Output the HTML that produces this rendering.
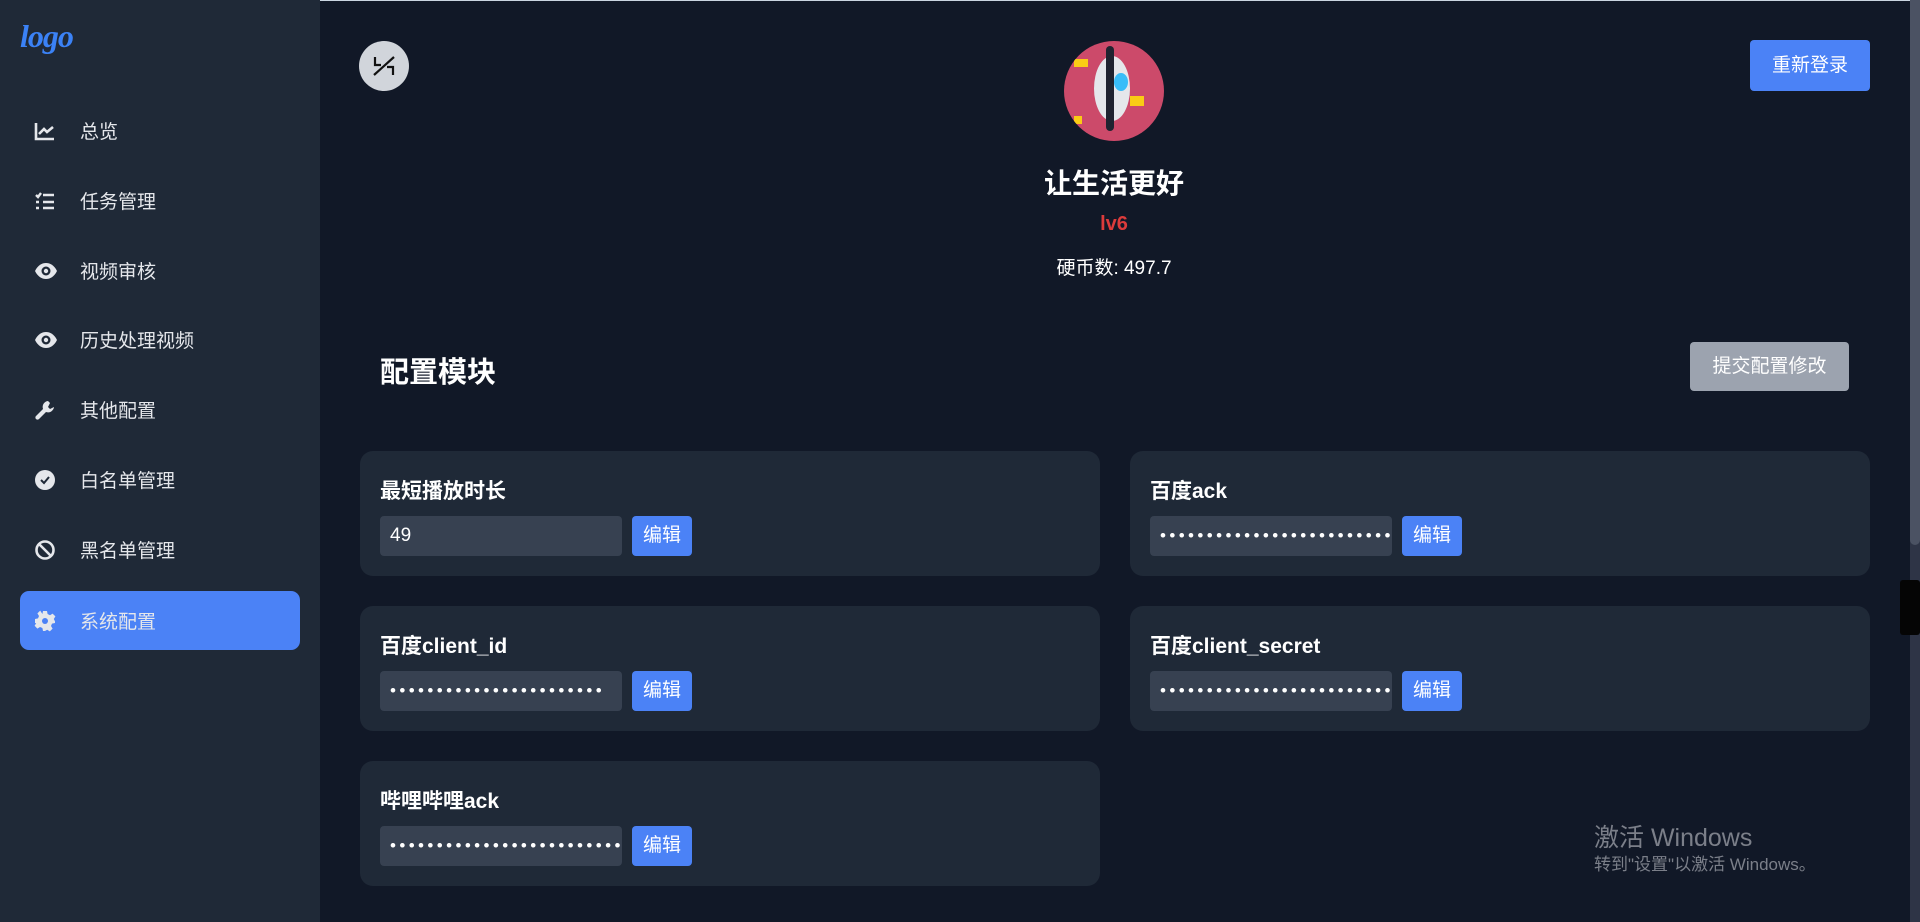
<!DOCTYPE html>
<html><head><meta charset="utf-8"><style>
*{margin:0;padding:0;box-sizing:border-box}
body{width:1920px;height:922px;overflow:hidden;background:#111827;font-family:"Liberation Sans","Noto Sans CJK SC",sans-serif;color:#fff;position:relative}
.side{position:absolute;left:0;top:0;width:320px;height:922px;background:#1f2937}
.logo{position:absolute;left:20px;top:18px;font:italic bold 32px "Liberation Serif",serif;color:#3b82f6;letter-spacing:-1px}
.nav{position:absolute;left:20px;width:280px;height:59px;display:flex;align-items:center;font-size:19px;color:#e5e7eb}
.nav svg{position:absolute;left:14px}
.nav span{position:absolute;left:60px}
.nav.act{background:#4b82f6;border-radius:9px}
.abs{position:absolute}
.card{position:absolute;width:740px;height:125px;background:#1f2937;border-radius:13px}
.card h3{position:absolute;left:20px;top:24px;font-size:21px;font-weight:bold}
.inp{position:absolute;left:20px;top:65px;width:242px;height:40px;background:#374151;border-radius:4px;font-size:19px;line-height:40px;padding-left:10px;overflow:hidden;white-space:nowrap}
.pw{letter-spacing:3.4px;font-size:17px}
.btn{position:absolute;left:272px;top:65px;width:60px;height:40px;background:#4b82f6;border-radius:4px;font-size:19px;line-height:40px;text-align:center}
</style></head><body>
<div class="abs" style="left:0;top:0;width:1920px;height:1px;background:#cbd5e1"></div>
<div class="side">
<div class="logo">logo</div>
<div class="nav" style="top:101px"><svg width="22" height="22" viewBox="0 0 22 22" fill="none" stroke="#e5e7eb" stroke-width="2.6"><path d="M2 3v16h18M5 14l5-5 3 3 6-5"/></svg><span>总览</span></div>
<div class="nav" style="top:171px"><svg width="22" height="22" viewBox="0 0 22 22" fill="none" stroke="#e5e7eb" stroke-width="2.4"><path d="M2 5l2 2 3-4M2 12h3M2 18h3M9 5h11M9 12h11M9 18h11"/></svg><span>任务管理</span></div>
<div class="nav" style="top:241px"><svg width="24" height="22" viewBox="0 0 24 22"><path d="M1 11C4 5 8 3 12 3s8 2 11 8c-3 6-7 8-11 8S4 17 1 11z" fill="#e5e7eb"/><circle cx="12" cy="11" r="4.5" fill="#1f2937"/><circle cx="12" cy="11" r="2.2" fill="#e5e7eb"/></svg><span>视频审核</span></div>
<div class="nav" style="top:310px"><svg width="24" height="22" viewBox="0 0 24 22"><path d="M1 11C4 5 8 3 12 3s8 2 11 8c-3 6-7 8-11 8S4 17 1 11z" fill="#e5e7eb"/><circle cx="12" cy="11" r="4.5" fill="#1f2937"/><circle cx="12" cy="11" r="2.2" fill="#e5e7eb"/></svg><span>历史处理视频</span></div>
<div class="nav" style="top:380px"><svg width="22" height="22" viewBox="0 0 22 22"><path d="M14 2a6 6 0 0 0-5 8L2 17a2 2 0 0 0 3 3l7-7a6 6 0 0 0 8-5l-4 2-2-2 2-4z" fill="#e5e7eb"/></svg><span>其他配置</span></div>
<div class="nav" style="top:450px"><svg width="22" height="22" viewBox="0 0 22 22"><circle cx="11" cy="11" r="10" fill="#e5e7eb"/><path d="M7 11l3 3 5-6" stroke="#1f2937" stroke-width="2" fill="none"/></svg><span>白名单管理</span></div>
<div class="nav" style="top:520px"><svg width="22" height="22" viewBox="0 0 22 22" fill="none" stroke="#e5e7eb" stroke-width="2.6"><circle cx="11" cy="11" r="8.5"/><path d="M5 5l12 12"/></svg><span>黑名单管理</span></div>
<div class="nav act" style="top:591px"><svg width="22" height="22" viewBox="0 0 22 22"><path d="M9 1h4l.6 3 2.4 1.2 2.6-1.6 2.8 2.8-1.6 2.6L21 11.4v0L21 13l-3 .6-1 2.4 1.6 2.6-2.8 2.8-2.6-1.6L11 21H9l-.6-3-2.4-1-2.6 1.6-2.8-2.8 1.6-2.6L1 13V9l3-.6 1-2.4-1.6-2.6 2.8-2.8L8.4 4z" fill="#e5e7eb"/><circle cx="11" cy="11" r="3" fill="#4b82f6"/></svg><span>系统配置</span></div>
</div>
<div class="abs" style="left:359px;top:41px;width:50px;height:50px;border-radius:50%;background:#d1d5db"><svg width="50" height="50" viewBox="0 0 50 50" fill="none" stroke="#111" stroke-width="2.2"><path d="M16 16v8h6M34 34v-8h-6M15 34l20-18"/></svg></div>
<div class="abs" style="left:1064px;top:41px;width:100px;height:100px;border-radius:50%;background:#cc4a6a;overflow:hidden">
<div class="abs" style="left:30px;top:15px;width:36px;height:65px;border-radius:50%;background:#e5e7eb"></div>
<div class="abs" style="left:42px;top:5px;width:8px;height:85px;background:#1f2330;border-radius:4px"></div>
<div class="abs" style="left:50px;top:32px;width:14px;height:18px;background:#38bdf8;border-radius:50%"></div>
<div class="abs" style="left:10px;top:18px;width:14px;height:8px;background:#facc15"></div>
<div class="abs" style="left:66px;top:55px;width:14px;height:10px;background:#facc15"></div>
<div class="abs" style="left:10px;top:75px;width:8px;height:8px;background:#facc15"></div>
</div>
<div class="abs" style="left:914px;width:400px;top:162px;text-align:center;font-size:28px;font-weight:bold">让生活更好</div>
<div class="abs" style="left:914px;width:400px;top:213px;text-align:center;font-size:20px;font-weight:bold;color:#dc3b3b">lv6</div>
<div class="abs" style="left:914px;width:400px;top:253px;text-align:center;font-size:19px">硬币数: 497.7</div>
<div class="abs" style="left:1750px;top:40px;width:120px;height:51px;background:#4b82f6;border-radius:4px;font-size:19px;line-height:51px;text-align:center">重新登录</div>
<div class="abs" style="left:380px;top:349px;font-size:29px;font-weight:bold">配置模块</div>
<div class="abs" style="left:1690px;top:342px;width:159px;height:49px;background:#9ca3af;border-radius:4px;font-size:19px;line-height:49px;text-align:center">提交配置修改</div>
<div class="card" style="left:360px;top:451px"><h3>最短播放时长</h3><div class="inp">49</div><div class="btn">编辑</div></div>
<div class="card" style="left:1130px;top:451px"><h3>百度ack</h3><div class="inp pw">••••••••••••••••••••••••••••</div><div class="btn">编辑</div></div>
<div class="card" style="left:360px;top:606px"><h3>百度client_id</h3><div class="inp pw">•••••••••••••••••••••••</div><div class="btn">编辑</div></div>
<div class="card" style="left:1130px;top:606px"><h3>百度client_secret</h3><div class="inp pw">••••••••••••••••••••••••••••</div><div class="btn">编辑</div></div>
<div class="card" style="left:360px;top:761px"><h3>哔哩哔哩ack</h3><div class="inp pw">••••••••••••••••••••••••••••</div><div class="btn">编辑</div></div>
<div class="abs" style="left:1594px;top:818px;font-size:25px;color:#7b7f89">激活 Windows</div>
<div class="abs" style="left:1594px;top:850px;font-size:17px;color:#7b7f89">转到"设置"以激活 Windows。</div>
<div class="abs" style="left:1910px;top:0;width:10px;height:922px;background:#2e3446"></div>
<div class="abs" style="left:1910px;top:0;width:10px;height:545px;background:#4b5263;border-radius:0 0 5px 5px"></div>
<div class="abs" style="left:1900px;top:580px;width:20px;height:55px;background:#050505;border-radius:3px"></div>
</body></html>
